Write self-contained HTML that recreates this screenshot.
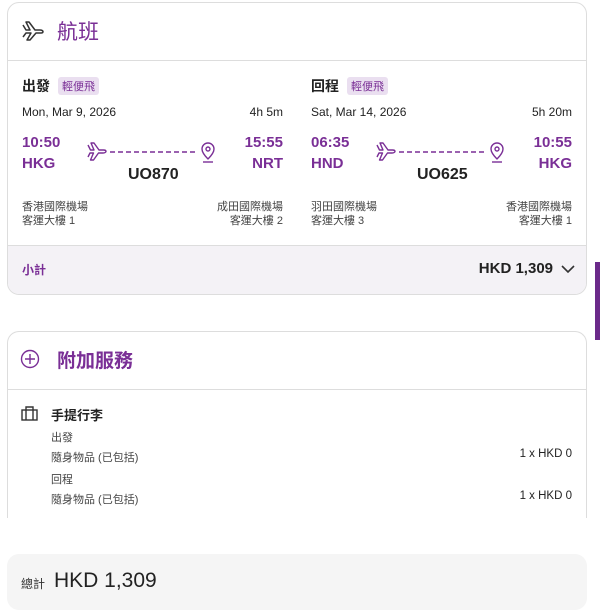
<!DOCTYPE html>
<html><head><meta charset="utf-8"><style>
*{margin:0;padding:0;box-sizing:border-box}
body{width:600px;height:612px;background:#fff;font-family:"Liberation Sans","Noto Sans CJK TC",sans-serif;color:#222;position:relative;overflow:hidden}
.a{position:absolute;white-space:nowrap}
.r{text-align:right}
.p{color:#7a2f96}
.b{font-weight:bold}
.tag{background:#eadff0;color:#7a2f96;font-size:11px;padding:1px 4px;border-radius:3px}
</style></head><body>
<div class="a" style="left:7px;top:2px;width:580px;height:293px;border:1px solid #ddd;border-radius:12px;overflow:hidden">
  <div class="a" style="left:0;top:57px;width:100%;height:1px;background:#ddd"></div>
  <div class="a" style="left:0;top:242px;width:100%;height:51px;background:#f4f2f6;border-top:1px solid #ddd"></div>
</div>
<svg class="a" style="left:21px;top:20px" width="24" height="22" viewBox="0 0 24 20" fill="none" stroke="#333" stroke-width="1.5" stroke-linejoin="round"><path d="M2 4l3 5h4l-4-8h3l6 8h5c2 0 3 1 3 1.5S22 12 20 12h-5l-6 7H6l4-7H5l-3 4"/></svg>
<div class="a p" style="left:57px;top:16px;font-size:21px">航班</div>

<div class="a b" style="left:22px;top:76px;font-size:14px">出發</div>
<div class="a tag" style="left:58px;top:77px">輕便飛</div>
<div class="a" style="left:22px;top:105px;font-size:12px">Mon, Mar 9, 2026</div>
<div class="a r" style="left:183px;width:100px;top:105px;font-size:12px">4h 5m</div>
<div class="a p b" style="left:22px;top:134px;font-size:15px">10:50</div>
<div class="a p b" style="left:22px;top:155px;font-size:15px">HKG</div>
<div class="a p b r" style="left:183px;width:100px;top:134px;font-size:15px">15:55</div>
<div class="a p b r" style="left:183px;width:100px;top:155px;font-size:15px">NRT</div>
<div class="a b" style="left:128px;top:166px;font-size:16px">UO870</div>
<div class="a" style="left:22px;top:200px;font-size:11px;color:#444;line-height:14px">香港國際機場<br>客運大樓 1</div>
<div class="a r" style="left:200px;top:200px;width:83px;font-size:11px;color:#444;line-height:14px">成田國際機場<br>客運大樓 2</div>

<div class="a b" style="left:311px;top:76px;font-size:14px">回程</div>
<div class="a tag" style="left:347px;top:77px">輕便飛</div>
<div class="a" style="left:311px;top:105px;font-size:12px">Sat, Mar 14, 2026</div>
<div class="a r" style="left:472px;width:100px;top:105px;font-size:12px">5h 20m</div>
<div class="a p b" style="left:311px;top:134px;font-size:15px">06:35</div>
<div class="a p b" style="left:311px;top:155px;font-size:15px">HND</div>
<div class="a p b r" style="left:472px;width:100px;top:134px;font-size:15px">10:55</div>
<div class="a p b r" style="left:472px;width:100px;top:155px;font-size:15px">HKG</div>
<div class="a b" style="left:417px;top:166px;font-size:16px">UO625</div>
<div class="a" style="left:311px;top:200px;font-size:11px;color:#444;line-height:14px">羽田國際機場<br>客運大樓 3</div>
<div class="a r" style="left:489px;top:200px;width:83px;font-size:11px;color:#444;line-height:14px">香港國際機場<br>客運大樓 1</div>

<svg class="a" style="left:86px;top:141px" width="134" height="26" viewBox="0 0 134 24" fill="none" stroke="#7a2f96" stroke-width="1.4" stroke-linejoin="round"><path d="M2 3l2.5 5h3.5l-3-7h3l5 7h4.5c2 0 2.5 1 2.5 1.5S19 11 17 11h-4.5l-5 7H4.5l3-7H4L2 15"/><line x1="24" y1="10" x2="110" y2="10" stroke-dasharray="5 3"/><path d="M122 17c-4-4-6-7-6-10a6 6 0 0112 0c0 3-2 6-6 10z"/><circle cx="122" cy="7" r="2"/><path d="M117 20h10"/></svg>
<svg class="a" style="left:375px;top:141px" width="134" height="26" viewBox="0 0 134 24" fill="none" stroke="#7a2f96" stroke-width="1.4" stroke-linejoin="round"><path d="M2 3l2.5 5h3.5l-3-7h3l5 7h4.5c2 0 2.5 1 2.5 1.5S19 11 17 11h-4.5l-5 7H4.5l3-7H4L2 15"/><line x1="24" y1="10" x2="110" y2="10" stroke-dasharray="5 3"/><path d="M122 17c-4-4-6-7-6-10a6 6 0 0112 0c0 3-2 6-6 10z"/><circle cx="122" cy="7" r="2"/><path d="M117 20h10"/></svg>

<div class="a p b" style="left:22px;top:261px;font-size:12px">小計</div>
<div class="a r" style="left:403px;width:150px;top:260px;font-size:15px;font-weight:bold;color:#222">HKD 1,309</div>
<svg class="a" style="left:561px;top:264px" width="14" height="10" viewBox="0 0 14 10" fill="none" stroke="#333" stroke-width="1.6"><path d="M1 2l6 6 6-6"/></svg>
<div class="a" style="left:595px;top:262px;width:5px;height:78px;background:#6b2a8a"></div>

<div class="a" style="left:7px;top:331px;width:580px;height:200px;border:1px solid #ddd;border-radius:12px;border-bottom:none">
  <div class="a" style="left:0;top:57px;width:100%;height:1px;background:#ddd"></div>
</div>
<div class="a" style="left:0;top:518px;width:600px;height:30px;background:#fff"></div>
<svg class="a" style="left:20px;top:349px" width="20" height="20" viewBox="0 0 20 20" fill="none" stroke="#7a2f96" stroke-width="1.4"><circle cx="10" cy="10" r="8.5"/><path d="M10 5v10M5 10h10"/></svg>
<div class="a p b" style="left:57px;top:346px;font-size:19px">附加服務</div>
<svg class="a" style="left:21px;top:406px" width="17" height="15" viewBox="0 0 17 15" fill="none" stroke="#333" stroke-width="1.4"><rect x="1" y="4" width="15" height="10"/><path d="M5 4V1h7v3M5 4v10M12 4v10"/></svg>
<div class="a b" style="left:51px;top:405px;font-size:13px">手提行李</div>
<div class="a" style="left:51px;top:429px;font-size:11px;color:#444">出發</div>
<div class="a" style="left:51px;top:449px;font-size:11px;color:#444">隨身物品 (已包括)</div>
<div class="a r" style="left:472px;width:100px;top:448px;font-size:11.5px">1 x HKD 0</div>
<div class="a" style="left:51px;top:471px;font-size:11px;color:#444">回程</div>
<div class="a" style="left:51px;top:491px;font-size:11px;color:#444">隨身物品 (已包括)</div>
<div class="a r" style="left:472px;width:100px;top:490px;font-size:11.5px">1 x HKD 0</div>

<div class="a" style="left:7px;top:554px;width:580px;height:56px;background:#f5f5f5;border-radius:12px"></div>
<div class="a" style="left:21px;top:575px;font-size:12px;color:#333">總計</div>
<div class="a" style="left:54px;top:569px;font-size:21px;color:#222">HKD 1,309</div>
</body></html>
